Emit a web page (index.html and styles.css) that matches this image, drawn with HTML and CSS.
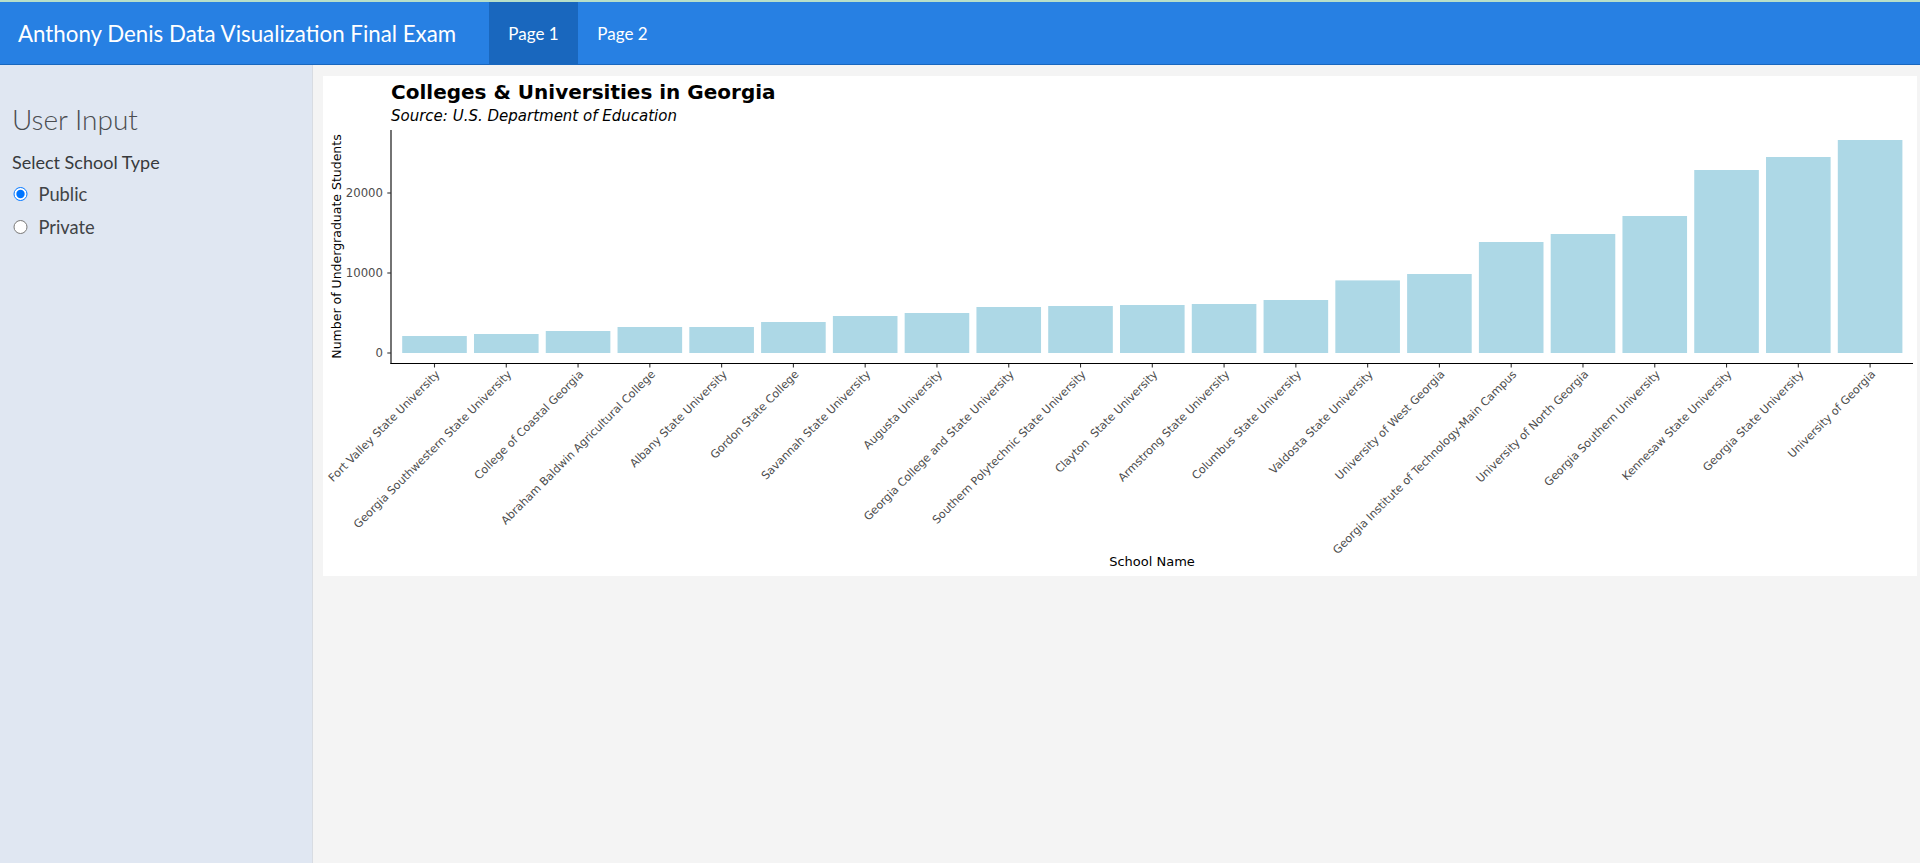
FILE: index.html
```html
<!DOCTYPE html>
<html lang="en">
<head>
<meta charset="utf-8">
<title>Anthony Denis Data Visualization Final Exam</title>
<link rel="stylesheet" href="styles.css">
</head>
<body>
<nav class="navbar">
  <span class="brand">Anthony Denis Data Visualization Final Exam</span>
  <ul class="tabs">
    <li class="tab active">Page 1</li>
    <li class="tab">Page 2</li>
  </ul>
</nav>
<div class="layout">
  <aside class="sidebar">
    <h3 class="side-title">User Input</h3>
    <div class="control-label">Select School Type</div>
    <label class="radio"><input type="radio" name="type" checked><span>Public</span></label>
    <label class="radio"><input type="radio" name="type"><span>Private</span></label>
  </aside>
  <main class="main">
    <div class="plot">
      <svg class="chart" width="1594" height="500" viewBox="0 0 1594 500" xmlns="http://www.w3.org/2000/svg">
        <text class="ttl" x="68" y="22.5">Colleges &amp; Universities in Georgia</text>
        <text class="sub" x="68" y="45">Source: U.S. Department of Education</text>
        <text class="axt axt-y" transform="translate(18,170.5) rotate(-90)" text-anchor="middle">Number of Undergraduate Students</text>
        <text class="axt" x="829" y="490" text-anchor="middle">School Name</text>
        <g class="bars">
          <rect x="79.2" y="260" width="64.6" height="17"/>
          <rect x="150.98" y="258" width="64.6" height="19"/>
          <rect x="222.76" y="255" width="64.6" height="22"/>
          <rect x="294.54" y="251" width="64.6" height="26"/>
          <rect x="366.32" y="251" width="64.6" height="26"/>
          <rect x="438.1" y="246" width="64.6" height="31"/>
          <rect x="509.88" y="240" width="64.6" height="37"/>
          <rect x="581.66" y="237" width="64.6" height="40"/>
          <rect x="653.44" y="231" width="64.6" height="46"/>
          <rect x="725.22" y="230" width="64.6" height="47"/>
          <rect x="797" y="229" width="64.6" height="48"/>
          <rect x="868.78" y="228" width="64.6" height="49"/>
          <rect x="940.56" y="224" width="64.6" height="53"/>
          <rect x="1012.34" y="204.4" width="64.6" height="72.6"/>
          <rect x="1084.12" y="198" width="64.6" height="79"/>
          <rect x="1155.9" y="166" width="64.6" height="111"/>
          <rect x="1227.68" y="158" width="64.6" height="119"/>
          <rect x="1299.46" y="140" width="64.6" height="137"/>
          <rect x="1371.24" y="94" width="64.6" height="183"/>
          <rect x="1443.02" y="81" width="64.6" height="196"/>
          <rect x="1514.8" y="64" width="64.6" height="213"/>
        </g>
        <g class="axis">
          <line x1="68" y1="54" x2="68" y2="288"/>
          <line x1="67.5" y1="287.5" x2="1590" y2="287.5"/>
        </g>
        <g class="ticks">
          <line x1="64.3" y1="277" x2="68" y2="277"/>
          <line x1="64.3" y1="197" x2="68" y2="197"/>
          <line x1="64.3" y1="117" x2="68" y2="117"/>
          <line x1="111.5" y1="288" x2="111.5" y2="291.5"/>
          <line x1="183.28" y1="288" x2="183.28" y2="291.5"/>
          <line x1="255.06" y1="288" x2="255.06" y2="291.5"/>
          <line x1="326.84" y1="288" x2="326.84" y2="291.5"/>
          <line x1="398.62" y1="288" x2="398.62" y2="291.5"/>
          <line x1="470.4" y1="288" x2="470.4" y2="291.5"/>
          <line x1="542.18" y1="288" x2="542.18" y2="291.5"/>
          <line x1="613.96" y1="288" x2="613.96" y2="291.5"/>
          <line x1="685.74" y1="288" x2="685.74" y2="291.5"/>
          <line x1="757.52" y1="288" x2="757.52" y2="291.5"/>
          <line x1="829.3" y1="288" x2="829.3" y2="291.5"/>
          <line x1="901.08" y1="288" x2="901.08" y2="291.5"/>
          <line x1="972.86" y1="288" x2="972.86" y2="291.5"/>
          <line x1="1044.64" y1="288" x2="1044.64" y2="291.5"/>
          <line x1="1116.42" y1="288" x2="1116.42" y2="291.5"/>
          <line x1="1188.2" y1="288" x2="1188.2" y2="291.5"/>
          <line x1="1259.98" y1="288" x2="1259.98" y2="291.5"/>
          <line x1="1331.76" y1="288" x2="1331.76" y2="291.5"/>
          <line x1="1403.54" y1="288" x2="1403.54" y2="291.5"/>
          <line x1="1475.32" y1="288" x2="1475.32" y2="291.5"/>
          <line x1="1547.1" y1="288" x2="1547.1" y2="291.5"/>
        </g>
        <g class="ylab" text-anchor="end">
          <text x="60" y="281.2">0</text>
          <text x="60" y="201.2">10000</text>
          <text x="60" y="121.2">20000</text>
        </g>
        <g class="xlab" text-anchor="end">
          <text transform="translate(117.5,299) rotate(-45)">Fort Valley State University</text>
          <text transform="translate(189.28,299) rotate(-45)">Georgia Southwestern State University</text>
          <text transform="translate(261.06,299) rotate(-45)">College of Coastal Georgia</text>
          <text transform="translate(332.84,299) rotate(-45)">Abraham Baldwin Agricultural College</text>
          <text transform="translate(404.62,299) rotate(-45)">Albany State University</text>
          <text transform="translate(476.4,299) rotate(-45)">Gordon State College</text>
          <text transform="translate(548.18,299) rotate(-45)">Savannah State University</text>
          <text transform="translate(619.96,299) rotate(-45)">Augusta University</text>
          <text transform="translate(691.74,299) rotate(-45)">Georgia College and State University</text>
          <text transform="translate(763.52,299) rotate(-45)">Southern Polytechnic State University</text>
          <text transform="translate(835.3,299) rotate(-45)" xml:space="preserve">Clayton  State University</text>
          <text transform="translate(907.08,299) rotate(-45)">Armstrong State University</text>
          <text transform="translate(978.86,299) rotate(-45)">Columbus State University</text>
          <text transform="translate(1050.64,299) rotate(-45)">Valdosta State University</text>
          <text transform="translate(1122.42,299) rotate(-45)">University of West Georgia</text>
          <text transform="translate(1194.2,299) rotate(-45)">Georgia Institute of Technology-Main Campus</text>
          <text transform="translate(1265.98,299) rotate(-45)">University of North Georgia</text>
          <text transform="translate(1337.76,299) rotate(-45)">Georgia Southern University</text>
          <text transform="translate(1409.54,299) rotate(-45)">Kennesaw State University</text>
          <text transform="translate(1481.32,299) rotate(-45)">Georgia State University</text>
          <text transform="translate(1553.1,299) rotate(-45)">University of Georgia</text>
        </g>
      </svg>
    </div>
  </main>
</div>
</body>
</html>
```

FILE: styles.css
```css
* { box-sizing: border-box; }

html, body {
  margin: 0;
  padding: 0;
  height: 863px;
  overflow: hidden;
  font-family: Lato, "Open Sans", sans-serif;
  color: #373a3c;
}

.navbar {
  display: flex;
  align-items: stretch;
  height: 65px;
  background: #2780e3;
  border-top: 2px solid #b7dfc9;
  border-bottom: 1px solid #1967be;
}

.brand {
  display: flex;
  align-items: center;
  padding: 0 0 0 18px;
  width: 489px;
  color: #fff;
  font-size: 22.3px;
}

.tabs {
  display: flex;
  margin: 0;
  padding: 0;
  list-style: none;
}

.tab {
  display: flex;
  align-items: center;
  justify-content: center;
  width: 89px;
  color: #fff;
  font-size: 17px;
}

.tab.active {
  background: #1967be;
}

.layout {
  display: flex;
  height: 798px;
}

.sidebar {
  width: 313px;
  flex: none;
  background: #e0e7f2;
  border-right: 1px solid #d8dce2;
  padding: 34px 12px 0 12px;
}

.side-title {
  margin: 0 0 11px 0;
  font-size: 28px;
  font-weight: 300;
  line-height: 40px;
  color: #4a4d50;
}

.control-label {
  font-size: 18px;
  line-height: 24px;
  margin-bottom: 6px;
  color: #373a3c;
}

.radio {
  display: flex;
  align-items: center;
  height: 28px;
  margin-bottom: 5px;
  font-size: 18.3px;
  color: #404346;
}

.radio input {
  width: 14.5px;
  height: 14.5px;
  margin: 0 11px 0 1px;
}

.main {
  flex: 1;
  background: #f4f4f4;
  padding: 11px 0 0 10px;
}

.plot {
  width: 1594px;
  height: 500px;
  background: #fff;
}

.chart {
  display: block;
  font-family: "DejaVu Sans", sans-serif;
}

.ttl {
  font-size: 20px;
  font-weight: bold;
  fill: #000;
}

.sub {
  font-size: 15px;
  font-style: italic;
  fill: #000;
}

.axt {
  font-size: 13px;
  fill: #000;
}

.axt-y {
  font-size: 12.5px;
}

.bars rect {
  fill: #add8e6;
}

.axis line {
  stroke: #000;
  stroke-width: 1.1;
}

.ticks line {
  stroke: #333;
  stroke-width: 1.1;
}

.ylab text {
  font-size: 11.7px;
  fill: #4d4d4d;
}

.xlab text {
  font-size: 11.2px;
  fill: #4d4d4d;
}
```
